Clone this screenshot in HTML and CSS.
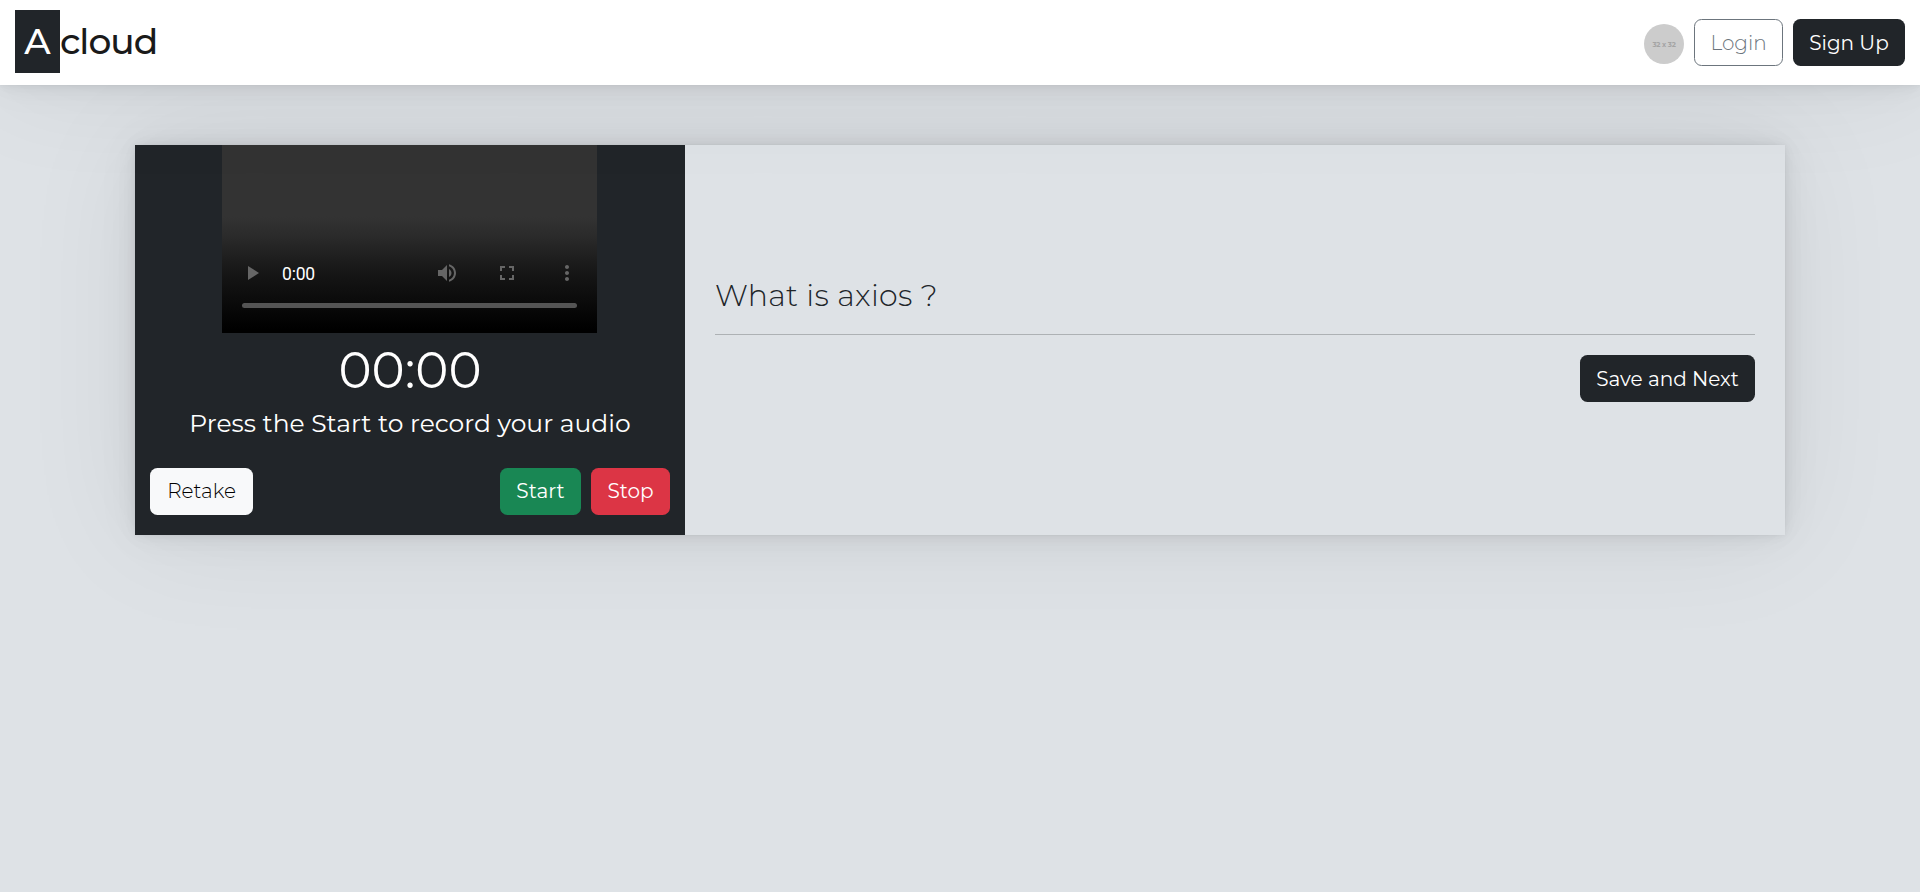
FILE: index.html
```html
<!DOCTYPE html>
<html lang="en">
<head>
<meta charset="utf-8">
<title>Acloud</title>
<link rel="stylesheet" href="styles.css">
</head>
<body>
<nav class="navbar">
  <a class="brand"><span class="brand-mark">A</span><span class="brand-name">cloud</span></a>
  <div class="nav-actions">
    <span class="avatar">32 x 32</span>
    <button class="btn btn-outline"><span>Login</span></button>
    <button class="btn btn-dark btn-signup"><span>Sign Up</span></button>
  </div>
</nav>
<main class="card">
  <section class="recorder">
    <div class="video">
      <div class="controls">
        <svg class="icon play" viewBox="0 0 24 24"><path d="M8 5v14l11-7z"/></svg>
        <span class="time">0:00</span>
        <svg class="icon volume" viewBox="0 0 24 24"><path d="M3 9v6h4l5 5V4L7 9H3zm13.5 3c0-1.77-1.02-3.29-2.5-4.03v8.05c1.48-.73 2.5-2.25 2.5-4.02zM14 3.23v2.06c2.89.86 5 3.54 5 6.71s-2.11 5.85-5 6.71v2.06c4.01-.91 7-4.49 7-8.77s-2.99-7.86-7-8.77z"/></svg>
        <svg class="icon full" viewBox="0 0 24 24"><path d="M7 14H5v5h5v-2H7v-3zm-2-4h2V7h3V5H5v5zm12 7h-3v2h5v-5h-2v3zM14 5v2h3v3h2V5h-5z"/></svg>
        <svg class="icon more" viewBox="0 0 24 24"><path d="M12 8c1.1 0 2-.9 2-2s-.9-2-2-2-2 .9-2 2 .9 2 2 2zm0 2c-1.1 0-2 .9-2 2s.9 2 2 2 2-.9 2-2-.9-2-2-2zm0 6c-1.1 0-2 .9-2 2s.9 2 2 2 2-.9 2-2-.9-2-2-2z"/></svg>
      </div>
      <div class="track"></div>
    </div>
    <div class="timer">00:00</div>
    <p class="hint">Press the Start to record your audio</p>
    <div class="actions">
      <button class="btn btn-light"><span>Retake</span></button>
      <button class="btn btn-success"><span>Start</span></button>
      <button class="btn btn-danger"><span>Stop</span></button>
    </div>
  </section>
  <section class="question">
    <h1 class="title">What is axios ?</h1>
    <hr class="rule">
    <button class="btn btn-dark btn-save"><span>Save and Next</span></button>
  </section>
</main>
</body>
</html>
```
FILE: styles.css
```css
* { box-sizing: border-box; }
body {
  display: flex;
  flex-direction: column;
  margin: 0;
  min-height: 892px;
  background: #dee2e6;
  color: #212529;
  font-family: Montserrat, Inter, "Open Sans", sans-serif;
  font-size: 20px;
}
.navbar, .card {
  box-shadow: 0 0 2.75px rgba(0,0,0,.02), 0 0 6.6px rgba(0,0,0,.028),
    0 0 12.5px rgba(0,0,0,.035), 0 0 22.4px rgba(0,0,0,.042),
    0 0 41.75px rgba(0,0,0,.05), 0 0 115px rgba(0,0,0,.07);
}
.navbar {
  z-index: 1;
  display: flex;
  justify-content: space-between;
  height: 85px;
  padding: 10px 15px;
  background: #fff;
}
.brand { display: flex; height: 63px; font-size: 36px; font-weight: 500; line-height: 63px; color: #1a1a1a; }
.brand-mark { width: 45px; text-align: center; background: #212529; color: #fff; font-weight: 500; }
.brand-name { letter-spacing: -.95px; }
.nav-actions { display: flex; align-items: center; gap: 10px; }
.avatar {
  width: 40px; height: 40px; margin-top: 3px;
  border-radius: 50%;
  background: #ccc; color: #a4a4a4;
  font-size: 7px; font-weight: 700; line-height: 42px; text-align: center; letter-spacing: -.2px;
}
.btn {
  flex: none;
  height: 47px;
  padding: 0;
  border: 0;
  border-radius: 7.5px;
  font: 400 20px/47px Montserrat, Inter, "Open Sans", sans-serif;
  color: #fff;
  white-space: nowrap;
}
.btn-outline { width: 89px; padding-top: 1px; border: 1px solid #6c757d; background: #fff; color: #6c757d; font-weight: 300; line-height: 44px; }
.btn-dark { padding-top: 1px; background: #212529; line-height: 46px; }
.btn-signup { width: 112px; }
.card { display: flex; width: 1650px; height: 390px; margin: 60px auto 0; background: #dee2e6; }
.recorder { width: 550px; padding: 0 15px; background: #212529; color: #fff; }
.video {
  width: 375px; height: 188px;
  margin: 0 0 0 72px;
  padding-top: 107px;
  background: linear-gradient(#333 0, #333 38%, #2b2b2b 48%, #161616 68%, #080808 87%, #000 98%);
}
.controls { display: flex; align-items: center; height: 41px; padding-left: 18px; }
.icon { width: 24px; height: 24px; fill: #666; }
.icon.play { margin-right: 18px; }
.time { width: 153px; padding-top: 2px; font: 17.5px/42px Roboto, sans-serif; letter-spacing: -.2px; }
.full, .more { margin-left: 36px; }
.track { height: 5px; margin: 10px 20px 0; border-radius: 3px; background: #545454; }
.timer { height: 60px; margin-top: 8px; font-size: 50px; line-height: 60px; text-align: center; }
.hint { height: 30px; margin: 7px 0 0; font-size: 25px; line-height: 30px; text-align: center; white-space: nowrap; }
.actions { display: flex; gap: 10px; margin-top: 30px; }
.btn-light { width: 103px; margin-right: auto; background: #f8f9fa; color: #000; font-weight: 300; }
.btn-success { width: 81px; background: #198754; }
.btn-danger { width: 79px; background: #dc3545; }
.question { display: flex; flex: 1; flex-direction: column; padding: 133px 30px 0; }
.title { margin: 0; font-size: 30px; font-weight: 300; line-height: 36px; letter-spacing: .33px; }
.rule { width: 100%; height: 1px; margin: 20px 0 20px; border: 0; background: #adb1b4; }
.btn-save { align-self: flex-end; width: 175px; }
```
